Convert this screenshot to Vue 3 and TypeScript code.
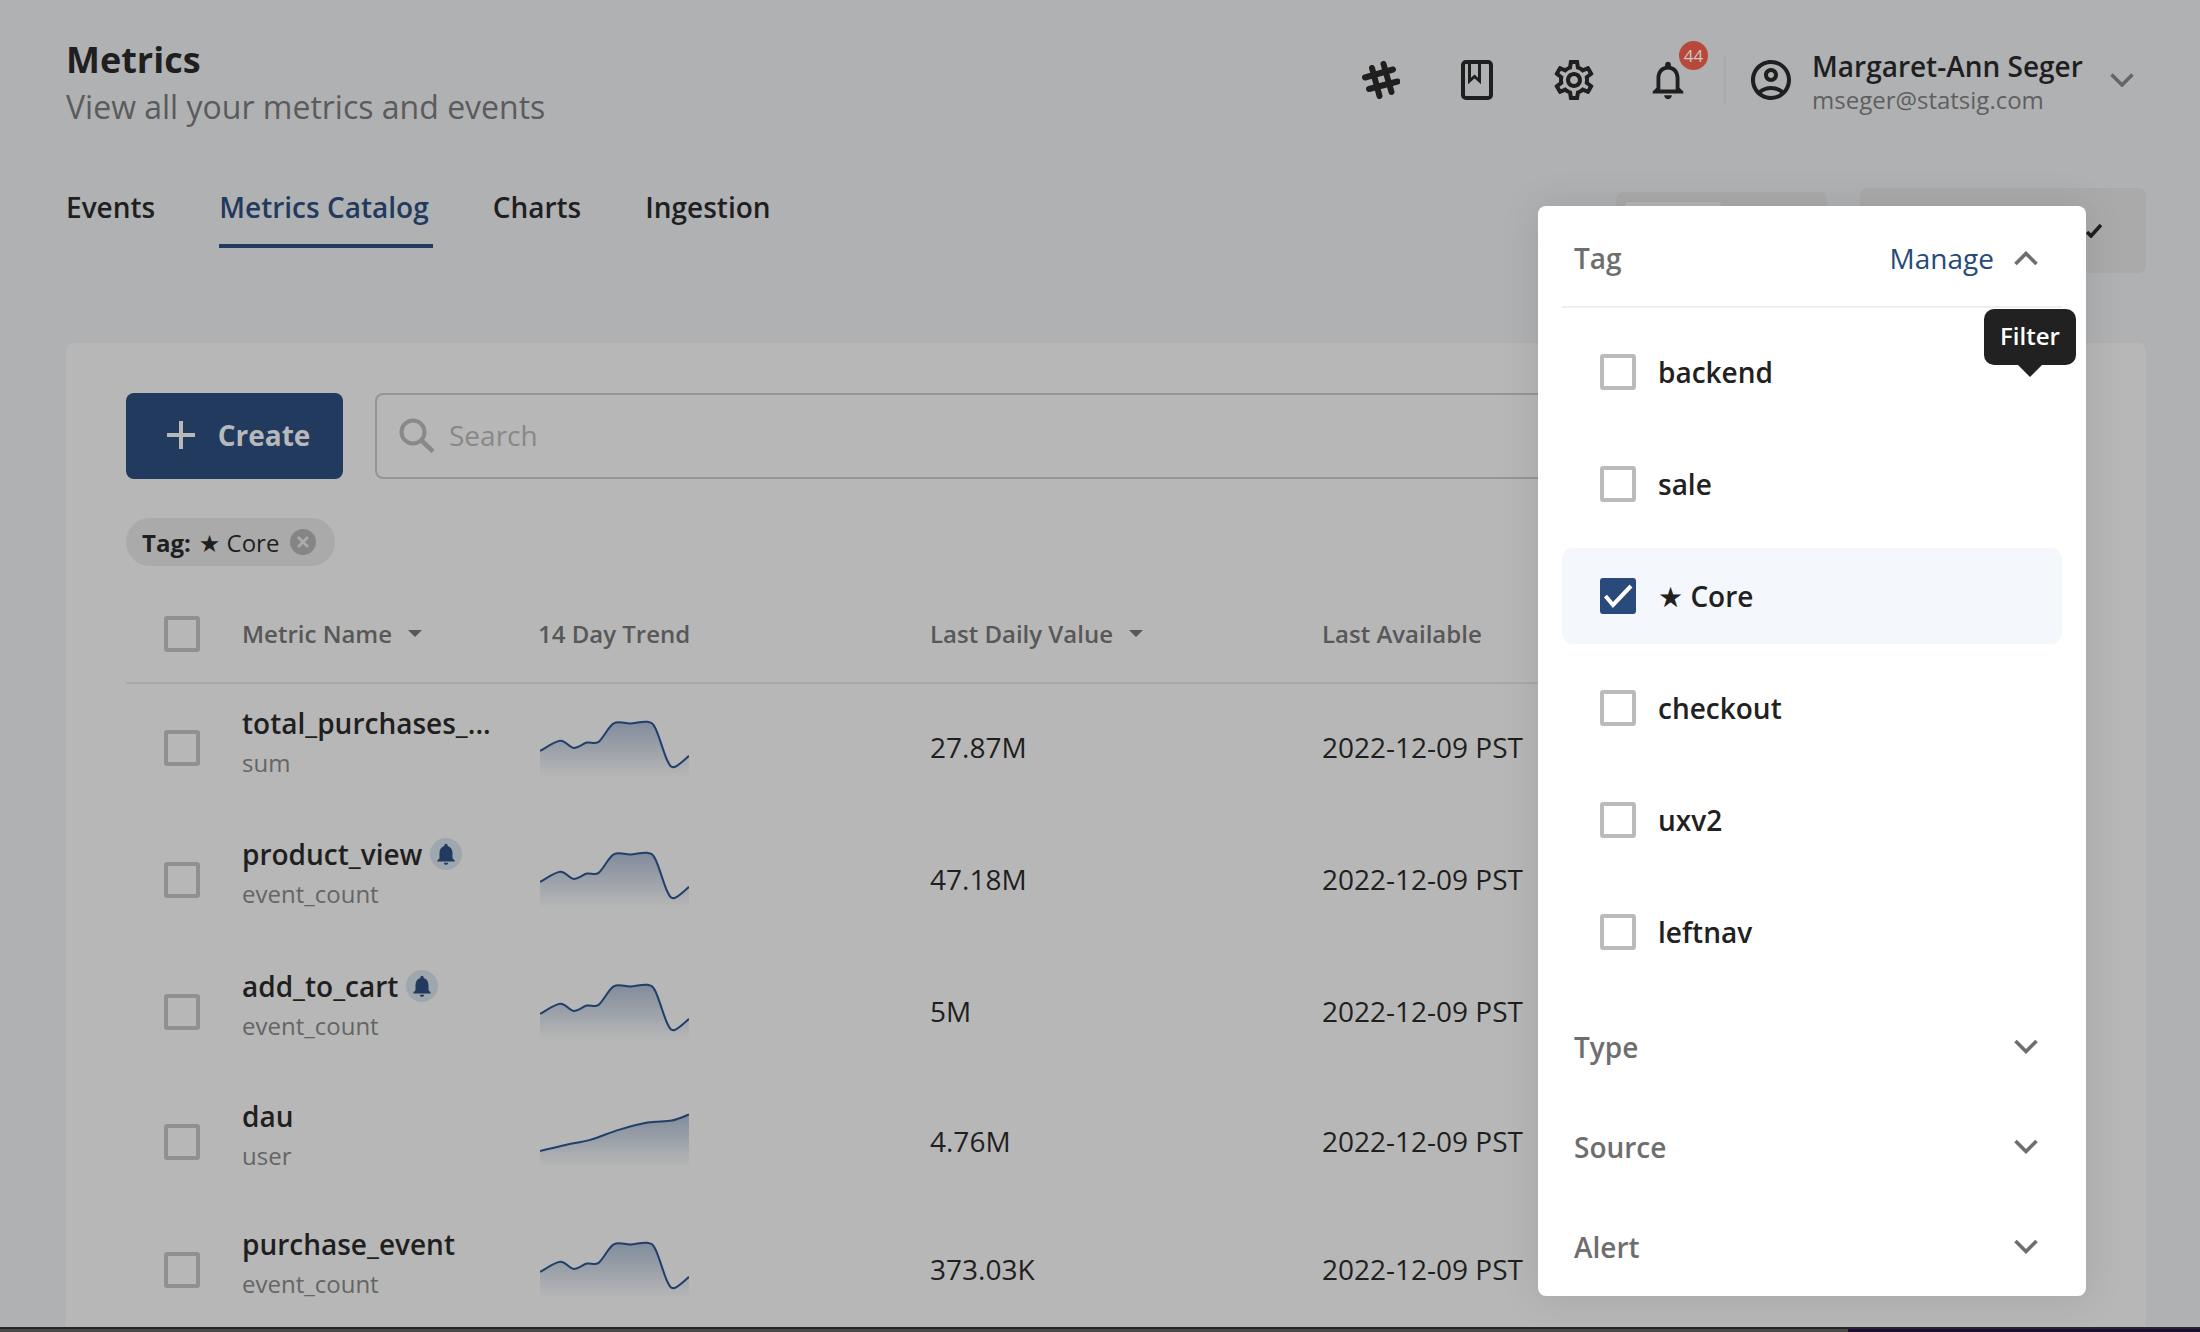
<script setup lang="ts">
type Pt = [number, number]
interface Row { name: string; sub: string; value: string; alert: boolean; height: number; pts: Pt[]; bottom: number }

const peak: Pt[] = [[0,182],[60,152],[100,173],[140,157],[175,155],[220,100],[270,100],[320,95],[345,115],[380,210],[402,230],[445,197]]

const rows: Row[] = [
  { name: 'total_purchases_...', sub: 'sum', value: '27.87M', alert: false, height: 128, pts: peak, bottom: 260 },
  { name: 'product_view', sub: 'event_count', value: '47.18M', alert: true, height: 135, pts: peak, bottom: 260 },
  { name: 'add_to_cart', sub: 'event_count', value: '5M', alert: true, height: 129, pts: peak, bottom: 260 },
  { name: 'dau', sub: 'user', value: '4.76M', alert: false, height: 131, pts: [[0,203],[76,185],[150,170],[235,140],[321,118],[394,112],[445,94]], bottom: 252 },
  { name: 'purchase_event', sub: 'event_count', value: '373.03K', alert: false, height: 125, pts: peak, bottom: 260 }
]

const tags = ['backend', 'sale', '★ Core', 'checkout', 'uxv2', 'leftnav']
const sections = ['Type', 'Source', 'Alert']

function linePath(p: Pt[]): string {
  let d = `M${p[0][0]} ${p[0][1]}`
  for (let i = 0; i < p.length - 1; i++) {
    const a = p[Math.max(i - 1, 0)], b = p[i], c = p[i + 1], e = p[Math.min(i + 2, p.length - 1)]
    const k = 6
    d += ` C${b[0] + (c[0] - a[0]) / k} ${b[1] + (c[1] - a[1]) / k} ${c[0] - (e[0] - b[0]) / k} ${c[1] - (e[1] - b[1]) / k} ${c[0]} ${c[1]}`
  }
  return d
}
function areaPath(r: Row): string {
  return `${linePath(r.pts)} L445 ${r.bottom} L0 ${r.bottom} Z`
}
</script>

<template>
  <div class="page">
    <header class="top">
      <div class="heading">
        <div class="title">Metrics</div>
        <div class="subtitle">View all your metrics and events</div>
      </div>
      <div class="actions">
        <svg class="ic-hash" viewBox="0 0 38 38" width="38" height="38" fill="none" stroke="#1f1f1f" stroke-width="6" stroke-linecap="round">
          <path d="M10 7 17.5 35M21.5 3 29.5 31M3 16.5 31 8.5M7 28 35.5 20.5" />
        </svg>
        <svg class="ic-book" viewBox="0 0 32 40" width="32" height="40" fill="none" stroke="#1f1f1f">
          <rect x="2" y="2" width="28" height="36" rx="3" stroke-width="4" />
          <path d="M8.5 2V21L13.5 16.5 18.5 21V2" stroke-width="3" />
        </svg>
        <svg class="ic-gear" viewBox="0 0 24 24" width="48" height="48" fill="#1f1f1f">
          <path d="M19.43 12.98c.04-.32.07-.64.07-.98 0-.34-.03-.66-.07-.98l2.11-1.65c.19-.15.24-.42.12-.64l-2-3.46c-.09-.16-.26-.25-.44-.25-.06 0-.12.01-.17.03l-2.49 1c-.52-.4-1.08-.73-1.69-.98l-.38-2.65C14.46 2.18 14.25 2 14 2h-4c-.25 0-.46.18-.49.42l-.38 2.65c-.61.25-1.17.59-1.69.98l-2.49-1c-.06-.02-.12-.03-.18-.03-.17 0-.34.09-.43.25l-2 3.46c-.13.22-.07.49.12.64l2.11 1.65c-.04.32-.07.65-.07.98 0 .33.03.66.07.98l-2.11 1.65c-.19.15-.24.42-.12.64l2 3.46c.09.16.26.25.44.25.06 0 .12-.01.17-.03l2.49-1c.52.4 1.08.73 1.69.98l.38 2.65c.03.24.24.42.49.42h4c.25 0 .46-.18.49-.42l.38-2.65c.61-.25 1.17-.59 1.69-.98l2.49 1c.06.02.12.03.18.03.17 0 .34-.09.43-.25l2-3.46c.12-.22.07-.49-.12-.64l-2.11-1.65zm-1.98-1.71c.04.31.05.52.05.73 0 .21-.02.43-.05.73l-.14 1.13.89.7 1.08.84-.7 1.21-1.27-.51-1.04-.42-.9.68c-.43.32-.84.56-1.25.73l-1.06.43-.16 1.13-.2 1.35h-1.4l-.19-1.35-.16-1.13-1.06-.43c-.43-.18-.83-.41-1.23-.71l-.91-.7-1.06.43-1.27.51-.7-1.21 1.08-.84.89-.7-.14-1.13c-.03-.31-.05-.54-.05-.74s.02-.43.05-.73l.14-1.13-.89-.7-1.08-.84.7-1.21 1.27.51 1.04.42.9-.68c.43-.32.84-.56 1.25-.73l1.06-.43.16-1.13.2-1.35h1.39l.19 1.35.16 1.13 1.06.43c.43.18.83.41 1.23.71l.91.7 1.06-.43 1.27-.51.7 1.21-1.07.85-.89.7.14 1.13zM12 8c-2.21 0-4 1.79-4 4s1.79 4 4 4 4-1.79 4-4-1.79-4-4-4zm0 6c-1.1 0-2-.9-2-2s.9-2 2-2 2 .9 2 2-.9 2-2 2z" />
        </svg>
        <div class="bell">
          <svg viewBox="0 0 24 24" width="46" height="46" fill="#1f1f1f">
            <path d="M12 22c1.1 0 2-.9 2-2h-4c0 1.1.9 2 2 2zm6-6v-5c0-3.07-1.63-5.64-4.5-6.32V4c0-.83-.67-1.5-1.5-1.5s-1.5.67-1.5 1.5v.68C7.64 5.36 6 7.92 6 11v5l-2 2v1h16v-1l-2-2zm-2 1H8v-6c0-2.48 1.51-4.5 4-4.5s4 2.02 4 4.5v6z" />
          </svg>
          <span class="badge">44</span>
        </div>
        <div class="vline"></div>
        <svg class="ic-user" viewBox="0 0 24 24" width="48" height="48" fill="#1f1f1f">
          <path d="M12 2C6.48 2 2 6.48 2 12s4.48 10 10 10 10-4.48 10-10S17.52 2 12 2zM7.35 18.5C8.66 17.56 10.26 17 12 17s3.34.56 4.65 1.5c-1.31.94-2.91 1.5-4.65 1.5s-3.34-.56-4.65-1.5zm10.79-1.38C16.45 15.8 14.32 15 12 15s-4.45.8-6.14 2.12C4.7 15.73 4 13.95 4 12c0-4.42 3.58-8 8-8s8 3.58 8 8c0 1.95-.7 3.73-1.86 5.12zM12 6c-1.93 0-3.5 1.57-3.5 3.5S10.07 13 12 13s3.5-1.57 3.5-3.5S13.93 6 12 6zm0 5c-.83 0-1.5-.67-1.5-1.5S11.17 8 12 8s1.5.67 1.5 1.5S12.83 11 12 11z" />
        </svg>
        <div class="user">
          <div class="user-name">Margaret-Ann Seger</div>
          <div class="user-mail">mseger@statsig.com</div>
        </div>
        <svg class="ic-caret" viewBox="0 0 24 14" width="24" height="14" fill="none" stroke="#666" stroke-width="3.6">
          <path d="M1.5 1.5 12 12 22.5 1.5" />
        </svg>
      </div>
    </header>

    <div class="tabbar">
      <nav class="tabs">
        <div class="tab">Events</div>
        <div class="tab active">Metrics Catalog</div>
        <div class="tab">Charts</div>
        <div class="tab">Ingestion</div>
      </nav>
      <div class="controls">
        <div class="seg"><div class="seg-on"></div></div>
        <div class="pick">
          <svg viewBox="0 0 16 15" width="16" height="15" fill="none" stroke="#1f1f1f" stroke-width="3.6">
            <path d="M1 9 5 13 15 2" />
          </svg>
        </div>
      </div>
    </div>

    <main class="card">
      <div class="toolbar">
        <div class="create">
          <svg viewBox="0 0 28 28" width="28" height="28" stroke="#b7b8b9" stroke-width="4" fill="none">
            <path d="M14 0V28M0 14H28" />
          </svg>
          <span>Create</span>
        </div>
        <div class="search">
          <svg viewBox="0 0 36 35" width="36" height="35" fill="none" stroke="#898989">
            <circle cx="14" cy="14" r="11.5" stroke-width="4" />
            <path d="M22.5 22.5 34 33.5" stroke-width="4.5" />
          </svg>
          <span>Search</span>
        </div>
      </div>

      <div class="chip">
        <b>Tag:</b>
        <span class="chip-val">★ Core</span>
        <svg viewBox="0 0 26 26" width="26" height="26">
          <circle cx="13" cy="13" r="13" fill="#858585" />
          <path d="M8 8 18 18M18 8 8 18" stroke="#acacac" stroke-width="2.6" />
        </svg>
      </div>

      <div class="grid head">
        <div class="cell-check"><span class="box"></span></div>
        <div class="th">Metric Name <i class="sort"></i></div>
        <div class="th">14 Day Trend</div>
        <div class="th">Last Daily Value <i class="sort"></i></div>
        <div class="th">Last Available</div>
      </div>

      <svg width="0" height="0" class="defs">
        <defs>
          <linearGradient id="spark" x1="0" y1="0" x2="0" y2="1">
            <stop offset="0" stop-color="#213f6b" stop-opacity=".36" />
            <stop offset="1" stop-color="#213f6b" stop-opacity="0" />
          </linearGradient>
        </defs>
      </svg>

      <div v-for="r in rows" :key="r.name" class="grid row" :style="{ height: r.height + 'px' }">
        <div class="cell-check"><span class="box"></span></div>
        <div class="metric">
          <div class="metric-name">
            <span>{{ r.name }}</span>
            <span v-if="r.alert" class="alert">
              <svg viewBox="0 0 24 24" width="26" height="26" fill="#213a5e">
                <path d="M12 22c1.1 0 2-.9 2-2h-4c0 1.1.89 2 2 2zm6-6v-5c0-3.07-1.64-5.64-4.5-6.32V4c0-.83-.67-1.5-1.5-1.5s-1.5.67-1.5 1.5v.68C7.63 5.36 6 7.92 6 11v5l-2 2v1h16v-1l-2-2z" />
              </svg>
            </span>
          </div>
          <div class="metric-sub">{{ r.sub }}</div>
        </div>
        <div class="trend">
          <svg viewBox="0 0 445 260" width="149" height="87">
            <path :d="areaPath(r)" fill="url(#spark)" />
            <path :d="linePath(r.pts)" fill="none" stroke="#213f6b" stroke-width="6" />
          </svg>
        </div>
        <div class="td">{{ r.value }}</div>
        <div class="td">2022-12-09 PST</div>
      </div>
    </main>

    <aside class="popover">
      <div class="pop-head">
        <span class="sec-label">Tag</span>
        <span class="manage">Manage</span>
        <svg viewBox="0 0 24 15" width="24" height="15" fill="none" stroke="#6e6e6e" stroke-width="3.6">
          <path d="M1.5 13 12 2.5 22.5 13" />
        </svg>
      </div>
      <div class="tag-list">
        <div v-for="t in tags" :key="t" class="tag" :class="{ on: t === '★ Core' }">
          <span class="pbox">
            <svg v-if="t === '★ Core'" viewBox="0 0 36 36" width="36" height="36" fill="none" stroke="#fff" stroke-width="4">
              <path d="M5.5 18 13 27 31 8" />
            </svg>
          </span>
          <span>{{ t }}</span>
        </div>
      </div>
      <div v-for="s in sections" :key="s" class="sec">
        <span class="sec-label">{{ s }}</span>
        <svg viewBox="0 0 24 15" width="24" height="15" fill="none" stroke="#6e6e6e" stroke-width="3.6">
          <path d="M1.5 2 12 12.5 22.5 2" />
        </svg>
      </div>
      <div class="tooltip">Filter</div>
    </aside>

    <div class="edge"><div class="edge-a"></div><div class="edge-b"></div></div>
  </div>
</template>

<style>
html, body { margin: 0; background: #b0b1b3; overflow: hidden; }
</style>

<style scoped>
.page {
  position: relative;
  box-sizing: border-box;
  width: 2200px;
  height: 1332px;
  overflow: hidden;
  padding: 0 54px 0 66px;
  background: #b0b1b3;
  color: #1f1f1f;
  font-family: "Open Sans", "Noto Sans", "DejaVu Sans", sans-serif;
}
.top { display: flex; justify-content: space-between; height: 180px; }
.heading { padding-top: 36px; }
.title { font-size: 36px; line-height: 48px; font-weight: 700; }
.subtitle { font-size: 32px; line-height: 46px; color: #5b5b5c; }
.actions { display: flex; align-items: center; height: 80px; padding-top: 40px; margin-right: 10px; }
.ic-hash { margin-right: 61px; }
.ic-book { margin-right: 57px; }
.ic-gear { margin-right: 47px; }
.bell { position: relative; width: 46px; height: 46px; margin-right: 33px; }
.badge {
  position: absolute;
  left: 34px;
  top: -16px;
  width: 29px;
  height: 29px;
  border-radius: 50%;
  background: #b8483a;
  color: #c8c8c8;
  font-size: 17px;
  line-height: 29px;
  text-align: center;
}
.vline { width: 2px; height: 48px; background: #a9aaac; margin-right: 21px; }
.ic-user { margin-right: 17px; }
.user { width: 298px; padding-top: 6px; }
.user-name { font-size: 28px; line-height: 34px; font-weight: 600; }
.user-mail { font-size: 24px; line-height: 34px; color: #5f5f60; }
.ic-caret { margin-right: 2px; }

.tabbar { display: flex; justify-content: space-between; height: 68px; }
.tabs { display: flex; gap: 64px; }
.tab { box-sizing: border-box; height: 68px; font-size: 28px; line-height: 55px; font-weight: 600; }
.tab.active { color: #213a5e; border-bottom: 4px solid #213a5e; padding-right: 4px; margin-right: -4px; }
.controls { display: flex; align-items: flex-start; gap: 33px; margin-top: 8px; }
.seg { box-sizing: border-box; width: 211px; height: 76px; margin-top: 4px; padding: 10px 9px; background: #aaaaaa; border-radius: 8px; }
.seg-on { width: 96px; height: 56px; background: #b6b6b6; border-radius: 4px; }
.pick { box-sizing: border-box; display: flex; align-items: center; justify-content: flex-end; width: 286px; height: 85px; padding-right: 44px; background: #aaaaaa; border-radius: 8px; }

.card {
  box-sizing: border-box;
  height: 1000px;
  margin-top: 95px;
  padding: 50px 60px 0;
  background: #b7b7b7;
  border-radius: 8px 8px 0 0;
}
.toolbar { display: flex; gap: 32px; height: 86px; }
.create {
  box-sizing: border-box;
  display: flex;
  align-items: center;
  justify-content: center;
  gap: 23px;
  width: 217px;
  padding-left: 8px;
  padding-bottom: 2px;
  background: #213a5e;
  border-radius: 8px;
  color: #b7b8b9;
  font-size: 28px;
  font-weight: 700;
}
.search {
  flex: 1;
  box-sizing: border-box;
  display: flex;
  align-items: center;
  gap: 14px;
  padding-left: 22px;
  padding-bottom: 2px;
  border: 2px solid #959595;
  border-radius: 8px;
  color: #888;
  font-size: 28px;
}
.chip {
  display: flex;
  align-items: center;
  box-sizing: border-box;
  width: 209px;
  height: 48px;
  margin-top: 39px;
  padding-left: 16px;
  border-radius: 24px;
  background: #aaaaaa;
  font-size: 24px;
}
.chip b { font-weight: 700; }
.chip-val { margin-left: 8px; margin-right: 11px; white-space: nowrap; }
.grid { display: grid; grid-template-columns: 116px 296px 392px 392px 1fr; align-items: center; }
.head { box-sizing: border-box; height: 98px; margin-top: 20px; border-bottom: 2px solid #a9a9a9; }
.cell-check { padding-left: 38px; display: flex; }
.box { box-sizing: border-box; width: 36px; height: 36px; border: 4px solid #909090; border-radius: 3px; }
.th { font-size: 24px; font-weight: 600; color: #585858; white-space: nowrap; display: flex; align-items: center; padding-bottom: 1px; }
.sort { display: inline-block; margin-left: 16px; border: 7px solid transparent; border-top-color: #585858; border-bottom-width: 0; }
.defs { position: absolute; }
.metric { margin-bottom: 13px; }
.metric-name { display: flex; align-items: center; gap: 8px; height: 40px; font-size: 28px; font-weight: 600; white-space: nowrap; }
.metric-sub { font-size: 24px; line-height: 36px; color: #656565; margin-top: 2px; }
.alert { display: flex; align-items: center; justify-content: center; width: 32px; height: 32px; border-radius: 50%; background: #9ea6ae; }
.trend { display: flex; padding-bottom: 30px; padding-left: 2px; }
.td { font-size: 28px; white-space: nowrap; color: #1f1f1f; margin-bottom: 2px; }

.popover {
  position: absolute;
  left: 1538px;
  top: 206px;
  box-sizing: border-box;
  width: 548px;
  height: 1090px;
  padding: 0 24px;
  background: #fff;
  border-radius: 8px;
  box-shadow: 0 0 40px rgba(0, 0, 0, .1);
}
.pop-head { display: flex; align-items: center; box-sizing: border-box; height: 102px; padding: 4px 24px 0 12px; border-bottom: 2px solid #eeeeee; }
.sec-label { font-size: 28px; color: #6e6e6e; font-weight: 600; }
.manage { margin-left: auto; margin-right: 20px; font-size: 28px; color: #264a7c; }
.tag-list { display: flex; flex-direction: column; gap: 16px; padding: 16px 0 17px; }
.tag { display: flex; align-items: center; gap: 22px; height: 96px; padding-left: 38px; font-size: 28px; font-weight: 600; color: #212121; border-radius: 10px; }
.tag.on { background: #f4f7fc; }
.pbox { box-sizing: border-box; width: 36px; height: 36px; border: 4px solid #bbbbbb; border-radius: 3px; display: flex; align-items: center; justify-content: center; }
.tag.on .pbox { border: 0; background: #2a4a7c; }
.sec { display: flex; align-items: center; justify-content: space-between; height: 100px; padding: 0 24px 0 12px; }
.sec svg { margin-top: -2px; }
.tooltip {
  position: absolute;
  left: 446px;
  top: 103px;
  width: 92px;
  height: 56px;
  border-radius: 10px;
  background: #212121;
  color: #fff;
  font-size: 24px;
  font-weight: 600;
  line-height: 54px;
  text-align: center;
}
.tooltip::after {
  content: "";
  position: absolute;
  left: 34px;
  top: 56px;
  border: 12px solid transparent;
  border-top-color: #212121;
  border-bottom-width: 0;
}
.edge { position: absolute; left: 0; right: 0; bottom: 0; height: 5px; display: flex; border-top: 2px solid #262626; box-sizing: border-box; }
.edge-a { width: 1848px; background: #4a4a4a; }
.edge-b { flex: 1; background: #1d0f33; }
</style>
